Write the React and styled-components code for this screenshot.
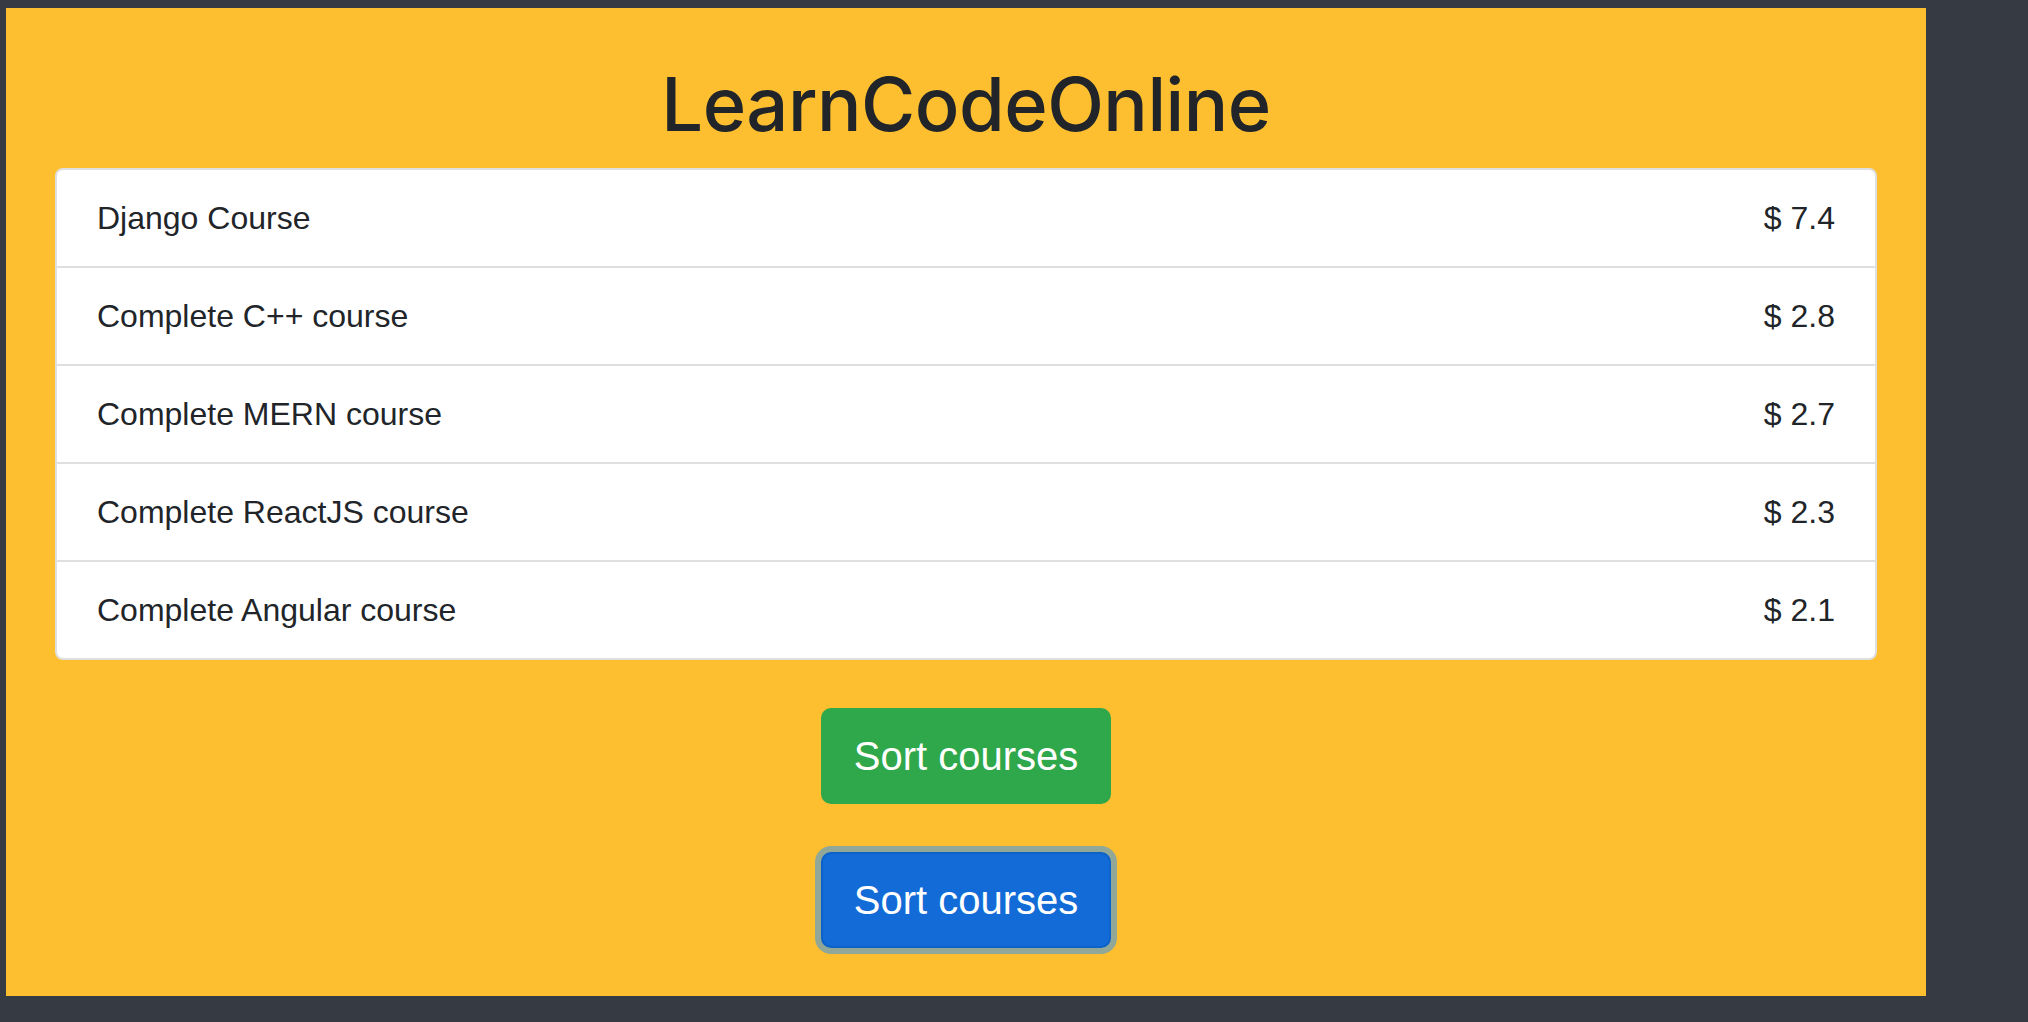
import React from "react";
import styled, { createGlobalStyle } from "styled-components";

const courses = [
  { name: "Django Course", price: 7.4 },
  { name: "Complete C++ course", price: 2.8 },
  { name: "Complete MERN course", price: 2.7 },
  { name: "Complete ReactJS course", price: 2.3 },
  { name: "Complete Angular course", price: 2.1 },
];

const App = () => {
  return (
    <>
      <GlobalStyle />
      <Panel>
        <Title>LearnCodeOnline</Title>
        <CourseList>
          {courses.map((course) => (
            <CourseItem key={course.name}>
              <span>{course.name}</span>
              <span>$ {course.price}</span>
            </CourseItem>
          ))}
        </CourseList>
        <SortButton variant="success">Sort courses</SortButton>
        <SortButton variant="primary" focused>
          Sort courses
        </SortButton>
      </Panel>
    </>
  );
};

export default App;

//STYLES_________________________
const GlobalStyle = createGlobalStyle`
  html, body {
    margin: 0;
    padding: 0;
    background: #363a43;
  }
  body {
    font-family: "Liberation Sans", Arial, sans-serif;
    color: #212529;
  }
  #root {
    padding: 8px 0 26px 6px;
  }
`;

const Panel = styled.div`
  width: 1920px;
  box-sizing: border-box;
  background: #fdbf2f;
  padding: 48px 49px;
  display: flex;
  flex-direction: column;
  align-items: center;
`;

const Title = styled.h1`
  margin: 0 0 16px;
  font-family: Inter, "Liberation Sans", sans-serif;
  font-size: 74px;
  line-height: 96px;
  font-weight: 500;
  letter-spacing: -0.5px;
  color: #212529;
`;

const CourseList = styled.ul`
  list-style: none;
  margin: 0;
  padding: 0;
  align-self: stretch;
  background: #fff;
  border: 2px solid #dfdfdf;
  border-radius: 8px;
  overflow: hidden;
`;

const CourseItem = styled.li`
  display: flex;
  justify-content: space-between;
  align-items: center;
  padding: 24px 40px;
  font-size: 32px;
  line-height: 48px;
  color: #212529;

  & + & {
    border-top: 2px solid #dfdfdf;
  }
`;

const colors = {
  success: { bg: "#2fa74b", border: "#2fa74b" },
  primary: { bg: "#126bd6", border: "#0c62c9" },
};

const SortButton = styled.button`
  margin-top: 48px;
  padding: 16px 31px;
  font-family: "Liberation Sans", Arial, sans-serif;
  font-size: 40px;
  line-height: 60px;
  color: #fff;
  background: ${(p) => colors[p.variant].bg};
  border: 2px solid ${(p) => colors[p.variant].border};
  border-radius: 10px;
  box-shadow: ${(p) => (p.focused ? "0 0 0 6px rgba(38, 143, 255, 0.5)" : "none")};
  cursor: pointer;
`;
